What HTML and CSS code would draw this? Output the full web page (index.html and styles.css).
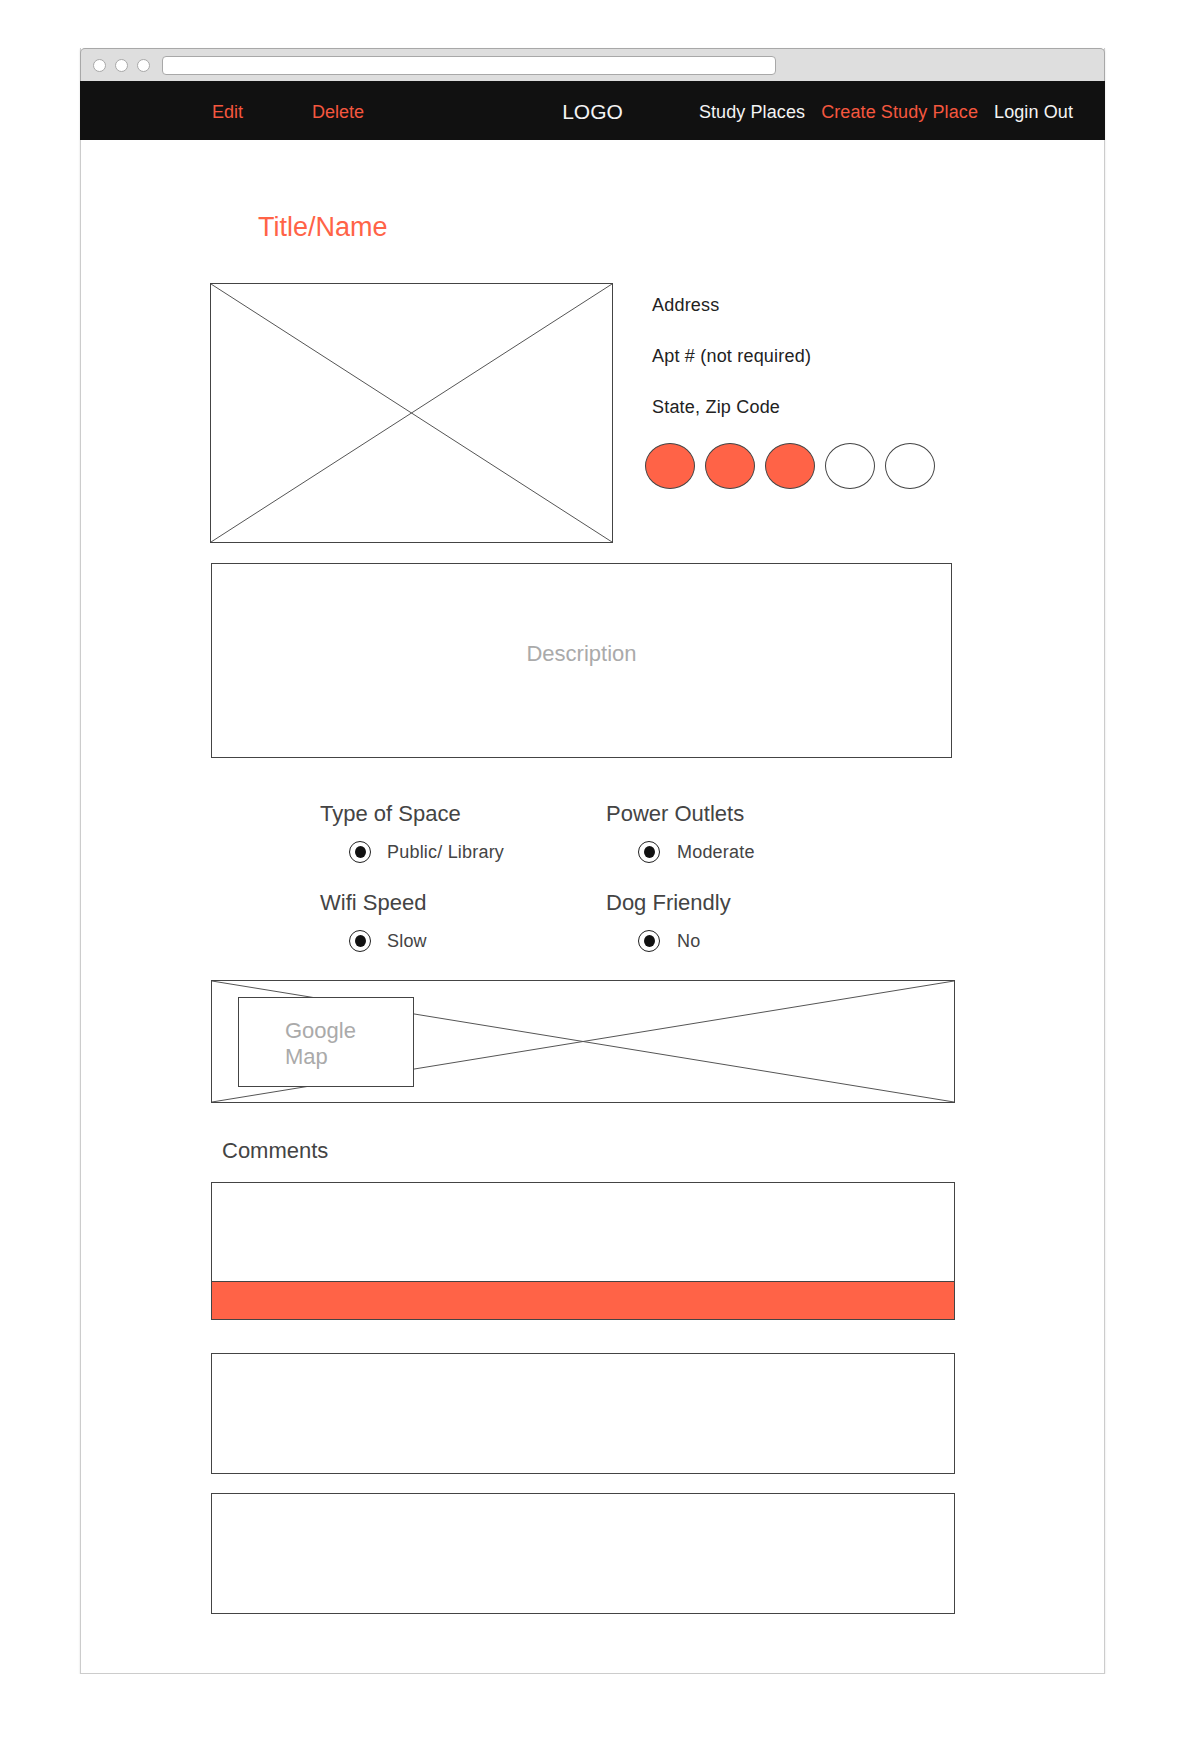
FILE: index.html
```html
<!DOCTYPE html>
<html lang="en">
<head>
    <meta charset="UTF-8">
    <meta name="viewport" content="width=device-width, initial-scale=1.0">
    <title>Study Place</title>
    <link rel="stylesheet" href="styles.css">
</head>
<body>
    <div class="window">
        <!-- browser chrome -->
        <div class="titlebar">
            <span class="light-dot"></span>
            <span class="light-dot"></span>
            <span class="light-dot"></span>
            <div class="urlbar"></div>
        </div>

        <!-- top navigation -->
        <nav class="topnav">
            <div class="nav-left">
                <a href="#">Edit</a>
                <a href="#">Delete</a>
            </div>
            <div class="logo">LOGO</div>
            <div class="nav-right">
                <a href="#" class="plain">Study Places</a>
                <a href="#">Create Study Place</a>
                <a href="#" class="plain">Login Out</a>
            </div>
        </nav>

        <main class="place">
            <h1 class="place-title">Title/Name</h1>

            <div class="place-top">
                <svg class="photo" preserveAspectRatio="none">
                    <line x1="0" y1="0" x2="100%" y2="100%"></line>
                    <line x1="100%" y1="0" x2="0" y2="100%"></line>
                </svg>
                <div class="place-info">
                    <p>Address</p>
                    <p>Apt # (not required)</p>
                    <p>State, Zip Code</p>
                    <div class="rating">
                        <span class="rating-dot on"></span>
                        <span class="rating-dot on"></span>
                        <span class="rating-dot on"></span>
                        <span class="rating-dot"></span>
                        <span class="rating-dot"></span>
                    </div>
                </div>
            </div>

            <div class="description">Description</div>

            <div class="features">
                <div class="feature">
                    <h3>Type of Space</h3>
                    <div class="option"><span class="radio"></span>Public/ Library</div>
                </div>
                <div class="feature">
                    <h3>Power Outlets</h3>
                    <div class="option"><span class="radio"></span>Moderate</div>
                </div>
                <div class="feature">
                    <h3>Wifi Speed</h3>
                    <div class="option"><span class="radio"></span>Slow</div>
                </div>
                <div class="feature">
                    <h3>Dog Friendly</h3>
                    <div class="option"><span class="radio"></span>No</div>
                </div>
            </div>

            <!-- map placeholder -->
            <div class="map">
                <svg class="map-x" preserveAspectRatio="none">
                    <line x1="0" y1="0" x2="100%" y2="100%"></line>
                    <line x1="100%" y1="0" x2="0" y2="100%"></line>
                </svg>
                <div class="map-label">Google<br>Map</div>
            </div>

            <h2 class="comments-title">Comments</h2>
            <div class="comment comment-new">
                <div class="comment-body"></div>
                <div class="comment-submit"></div>
            </div>
            <div class="comment comment-second"></div>
            <div class="comment comment-third"></div>
        </main>
    </div>
</body>
</html>
```

FILE: styles.css
```css
body{
    margin: 0;
    background-color: #fff;
    font-family: "Liberation Sans", Arial, sans-serif;
}
.window{
    width: 1023px;
    margin: 48px 0 0 80px;
    border: 1px solid #cccccc;
    border-top: none;
    box-shadow: 0 1px 2px rgba(0, 0, 0, 0.12);
}
.titlebar{
    display: flex;
    align-items: center;
    gap: 9px;
    height: 32px;
    margin: 0 -1px;
    padding-left: 12px;
    background-color: #dedede;
    border: 1px solid #a8a8a8;
    border-bottom: none;
    border-radius: 5px 5px 0 0;
}
.light-dot{
    width: 11px;
    height: 11px;
    border: 1px solid #a8a8a8;
    border-radius: 50%;
    background-color: #fff;
}
.urlbar{
    width: 612px;
    height: 17px;
    margin-left: 3px;
    background-color: #fff;
    border: 1px solid #a8a8a8;
    border-radius: 4px;
}
.topnav{
    display: grid;
    grid-template-columns: 1fr auto 1fr;
    align-items: center;
    height: 59px;
    margin: 0 -1px;
    padding-top: 3px;
    box-sizing: border-box;
    background-color: #111111;
    font-size: 18px;
}
.topnav a{
    color: #f5573f;
    text-decoration: none;
}
.topnav a.plain{
    color: #f4f4f4;
}
.nav-left{
    display: flex;
    gap: 69px;
    padding-left: 132px;
}
.nav-right{
    display: flex;
    justify-content: flex-end;
    gap: 16px;
    padding-right: 32px;
    letter-spacing: 0.1px;
}
.logo{
    color: #f4f4f4;
    font-size: 21px;
}
.place{
    padding: 0 0 59px 130px;
}
.place-title{
    margin: 72px 0 0 47px;
    font-size: 27px;
    font-weight: normal;
    color: #ff6347;
}
.place-top{
    display: flex;
    align-items: flex-start;
    gap: 32px;
    margin-top: 40px;
}
.photo{
    display: block;
    width: 403px;
    height: 260px;
    margin-left: -1px;
    box-sizing: border-box;
    border: 1px solid #444;
}
.photo line,
.map-x line{
    stroke: #555;
    stroke-width: 1;
}
.place-info{
    padding-top: 12px;
    font-size: 18px;
    letter-spacing: 0.2px;
    color: #222;
}
.place-info p{
    margin: 0 0 31px 0;
    padding-left: 7px;
    line-height: 20px;
}
.place-info p:nth-child(3){
    margin-bottom: 26px;
}
.rating{
    display: flex;
    gap: 10px;
}
.rating-dot{
    width: 50px;
    height: 46px;
    box-sizing: border-box;
    border: 1px solid #444;
    border-radius: 50%;
    background-color: #fff;
}
.rating-dot.on{
    background-color: #ff6347;
}
.description{
    display: flex;
    align-items: center;
    justify-content: center;
    width: 741px;
    height: 195px;
    margin-top: 20px;
    padding-bottom: 14px;
    box-sizing: border-box;
    border: 1px solid #444;
    font-size: 22px;
    color: #aaaaaa;
}
.features{
    display: grid;
    grid-template-columns: 286px 286px;
    row-gap: 27px;
    margin: 43px 0 0 109px;
    color: #444;
}
.feature h3{
    margin: 0;
    font-size: 22px;
    font-weight: normal;
}
.option{
    display: flex;
    align-items: center;
    gap: 16px;
    height: 22px;
    margin-top: 14px;
    padding-left: 29px;
    font-size: 18px;
    letter-spacing: 0.2px;
}
.feature:nth-child(even) .option{
    gap: 17px;
    padding-left: 32px;
}
.radio{
    display: flex;
    align-items: center;
    justify-content: center;
    width: 22px;
    height: 22px;
    box-sizing: border-box;
    border: 1.5px solid #222;
    border-radius: 50%;
}
.radio::after{
    content: "";
    width: 11px;
    height: 12px;
    border-radius: 50%;
    background-color: #111;
}
.map{
    position: relative;
    width: 744px;
    height: 123px;
    margin-top: 28px;
    padding: 16px 0 0 26px;
    box-sizing: border-box;
    border: 1px solid #444;
}
.map-x{
    position: absolute;
    top: 0;
    left: 0;
    width: 100%;
    height: 100%;
}
.map-label{
    position: relative;
    width: 176px;
    height: 90px;
    padding: 20px 0 0 46px;
    box-sizing: border-box;
    border: 1px solid #444;
    background-color: #fff;
    font-size: 22px;
    line-height: 26px;
    color: #aaaaaa;
}
.comments-title{
    margin: 35px 0 0 11px;
    font-size: 22px;
    font-weight: normal;
    color: #444;
}
.comment{
    width: 744px;
    height: 121px;
    box-sizing: border-box;
    border: 1px solid #444;
}
.comment-new{
    height: 138px;
    margin-top: 18px;
}
.comment-body{
    height: 98px;
}
.comment-submit{
    height: 38px;
    box-sizing: border-box;
    border-top: 1px solid #444;
    background-color: #ff6347;
}
.comment-second{
    margin-top: 33px;
}
.comment-third{
    margin-top: 19px;
}
```
